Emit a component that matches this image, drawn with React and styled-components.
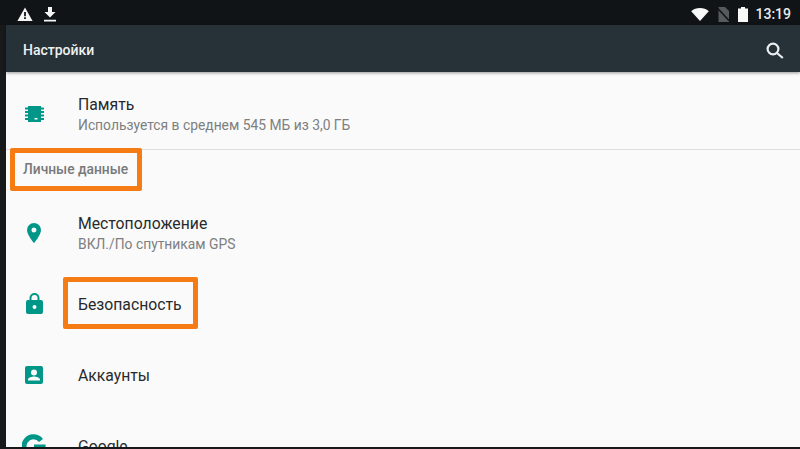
import React from 'react';
import styled, { createGlobalStyle } from 'styled-components';

const Global = createGlobalStyle`
  html, body {
    margin: 0;
    padding: 0;
    background: #17191b;
  }
`;

const Screen = styled.div`
  position: relative;
  width: 800px;
  height: 449px;
  overflow: hidden;
  display: flex;
  flex-direction: column;
  font-family: Roboto, "Noto Sans", sans-serif;
  background: #17191b;
`;

const StatusBar = styled.div`
  height: 25px;
  flex: none;
  display: flex;
  align-items: center;
  justify-content: space-between;
  padding: 3px 9px 0 17px;
  box-sizing: border-box;
  background: #101416;
`;

const StatusGroup = styled.div`
  display: flex;
  align-items: center;
  gap: ${p => p.$gap}px;
`;

const Clock = styled.span`
  color: #e9ebec;
  font-size: 14px;
  font-weight: 500;
  margin-left: -1px;
`;

const AppBar = styled.div`
  height: 47px;
  flex: none;
  margin-left: 6px;
  display: flex;
  align-items: center;
  justify-content: space-between;
  padding: 3px 16px 0 17px;
  box-sizing: border-box;
  background: #263238;
  box-shadow: 0 1px 3px rgba(0, 0, 0, 0.4);
  position: relative;
  z-index: 1;
`;

const AppTitle = styled.h1`
  margin: 0;
  font-size: 14px;
  font-weight: 500;
  color: #eef1f2;
`;

const Content = styled.div`
  flex: 1;
  min-height: 0;
  margin: 0 0 2px 6px;
  padding-top: 6px;
  background: #fafafa;
  overflow: hidden;
`;

const Row = styled.div`
  height: 71px;
  display: flex;
  align-items: center;
  box-sizing: border-box;
`;

const IconSlot = styled.div`
  width: 72px;
  flex: none;
  display: flex;
  justify-content: center;
  padding-right: 16px;
  box-sizing: border-box;
  color: #009688;
`;

const RowText = styled.div`
  display: flex;
  flex-direction: column;
  gap: 3px;
  padding-top: 2px;
`;

const Title = styled.div`
  font-size: 15.75px;
  line-height: 19px;
  color: #272a2c;
`;

const Subtitle = styled.div`
  font-size: 13.85px;
  line-height: 17px;
  color: #7d7f80;
`;

const Divider = styled.div`
  height: 1px;
  background: #dfdfdf;
`;

const SectionHeader = styled.div`
  height: 47px;
  padding: 0 0 9px 17px;
  box-sizing: border-box;
  display: flex;
  align-items: center;
  font-size: 13.8px;
  font-weight: 500;
  color: #77797a;
`;

const Callout = styled.div`
  position: absolute;
  left: ${p => p.$x}px;
  top: ${p => p.$y}px;
  width: ${p => p.$w}px;
  height: ${p => p.$h}px;
  box-sizing: border-box;
  border: 5px solid #f57c14;
  border-radius: 2px;
`;

const WarningIcon = () => (
  <svg width="16" height="14" viewBox="0 0 16 14" fill="#f4f5f5">
    <path fillRule="evenodd" d="M8 0.5 15.6 14H.4zM7.100 5v4.200h1.800V5zM7.100 10.200V12h1.800v-1.800z" />
  </svg>
);

const DownloadIcon = () => (
  <svg width="12" height="15" viewBox="0 0 12 15" fill="#f4f5f5">
    <path d="M4 0h4v5h3.500L6 10.600.5 5H4zM0 12.800h12V14.400H0z" />
  </svg>
);

const WifiIcon = () => (
  <svg width="18" height="13" viewBox="0 0 18 13" fill="#f7f8f8">
    <path d="M9 13 .2 3.200C2.500 1.200 5.600 0 9 0s6.500 1.200 8.800 3.200z" />
  </svg>
);

const NoSimIcon = () => (
  <svg width="13" height="15" viewBox="0 0 13 15">
    <path d="M1.500 0H8l4 4v11H1.500z" fill="#565a5c" />
    <path d="M.8 1.500 12.200 13.800" stroke="#101416" strokeWidth="1.600" />
  </svg>
);

const BatteryIcon = () => (
  <svg width="10" height="15" viewBox="0 0 10 15" fill="#f7f8f8">
    <path d="M3 0h4v1.500h3V15H0V1.500h3z" />
  </svg>
);

const SearchIcon = () => (
  <svg width="18" height="17" viewBox="0 0 18 17" fill="none" stroke="#eceff1" strokeWidth="2.200">
    <circle cx="7" cy="7" r="5.400" />
    <path d="M11 11 16.800 16" />
  </svg>
);

const ChipIcon = () => (
  <svg width="19" height="16" viewBox="0 0 19 16" fill="currentColor">
    <path fillRule="evenodd" d="M3 0h13v16H3zM9.500 12v1.600h3V12z" />
    <path d="M0 1.500h3v2H0zM0 5h3v2H0zM0 8.500h3v2H0zM0 12h3v2H0zM16 1.500h3v2h-3zM16 5h3v2h-3zM16 8.500h3v2h-3zM16 12h3v2h-3z" />
  </svg>
);

const PinIcon = () => (
  <svg width="14" height="20" viewBox="0 0 14 20" fill="currentColor">
    <path
      fillRule="evenodd"
      d="M7 0a7 7 0 0 1 7 7c0 5-7 13-7 13S0 12 0 7a7 7 0 0 1 7-7zm0 4.500a2.500 2.500 0 1 0 0 5 2.500 2.500 0 0 0 0-5z"
    />
  </svg>
);

const LockIcon = () => (
  <svg width="17" height="21" viewBox="0 0 17 21" fill="currentColor">
    <path
      fillRule="evenodd"
      d="M3.500 7V5a5 5 0 0 1 10 0v2H15a2 2 0 0 1 2 2v10a2 2 0 0 1-2 2H2a2 2 0 0 1-2-2V9a2 2 0 0 1 2-2zm2 0h6V5a3 3 0 0 0-6 0zm3 5a2 2 0 1 0 0 4 2 2 0 0 0 0-4z"
    />
  </svg>
);

const AccountIcon = () => (
  <svg width="18" height="18" viewBox="0 0 18 18" fill="currentColor">
    <path
      fillRule="evenodd"
      d="M2 0h14a2 2 0 0 1 2 2v14a2 2 0 0 1-2 2H2a2 2 0 0 1-2-2V2a2 2 0 0 1 2-2zm7 3.500a3 3 0 1 0 0 6 3 3 0 0 0 0-6zM3 14.500h12v-1c0-2-4-3-6-3s-6 1-6 3z"
    />
  </svg>
);

const GoogleIcon = () => (
  <svg width="24" height="24" viewBox="0 0 24 24" fill="none">
    <path d="M19 6.500A9.500 9.500 0 1 0 21 13H12" stroke="currentColor" strokeWidth="5" />
  </svg>
);

export default function App() {
  return (
    <Screen>
      <Global />
      <StatusBar>
        <StatusGroup $gap={11}>
          <WarningIcon />
          <DownloadIcon />
        </StatusGroup>
        <StatusGroup $gap={8}>
          <WifiIcon />
          <NoSimIcon />
          <BatteryIcon />
          <Clock>13:19</Clock>
        </StatusGroup>
      </StatusBar>
      <AppBar>
        <AppTitle>Настройки</AppTitle>
        <SearchIcon />
      </AppBar>
      <Content>
        <Row>
          <IconSlot><ChipIcon /></IconSlot>
          <RowText>
            <Title>Память</Title>
            <Subtitle>Используется в среднем 545 МБ из 3,0 ГБ</Subtitle>
          </RowText>
        </Row>
        <Divider />
        <SectionHeader>Личные данные</SectionHeader>
        <Row>
          <IconSlot><PinIcon /></IconSlot>
          <RowText>
            <Title>Местоположение</Title>
            <Subtitle>ВКЛ./По спутникам GPS</Subtitle>
          </RowText>
        </Row>
        <Row>
          <IconSlot><LockIcon /></IconSlot>
          <RowText>
            <Title>Безопасность</Title>
          </RowText>
        </Row>
        <Row>
          <IconSlot><AccountIcon /></IconSlot>
          <RowText>
            <Title>Аккаунты</Title>
          </RowText>
        </Row>
        <Row>
          <IconSlot><GoogleIcon /></IconSlot>
          <RowText>
            <Title>Google</Title>
          </RowText>
        </Row>
      </Content>
      <Callout $x={10} $y={148} $w={132} $h={43} />
      <Callout $x={63} $y={277} $w={135} $h={52} />
    </Screen>
  );
}
